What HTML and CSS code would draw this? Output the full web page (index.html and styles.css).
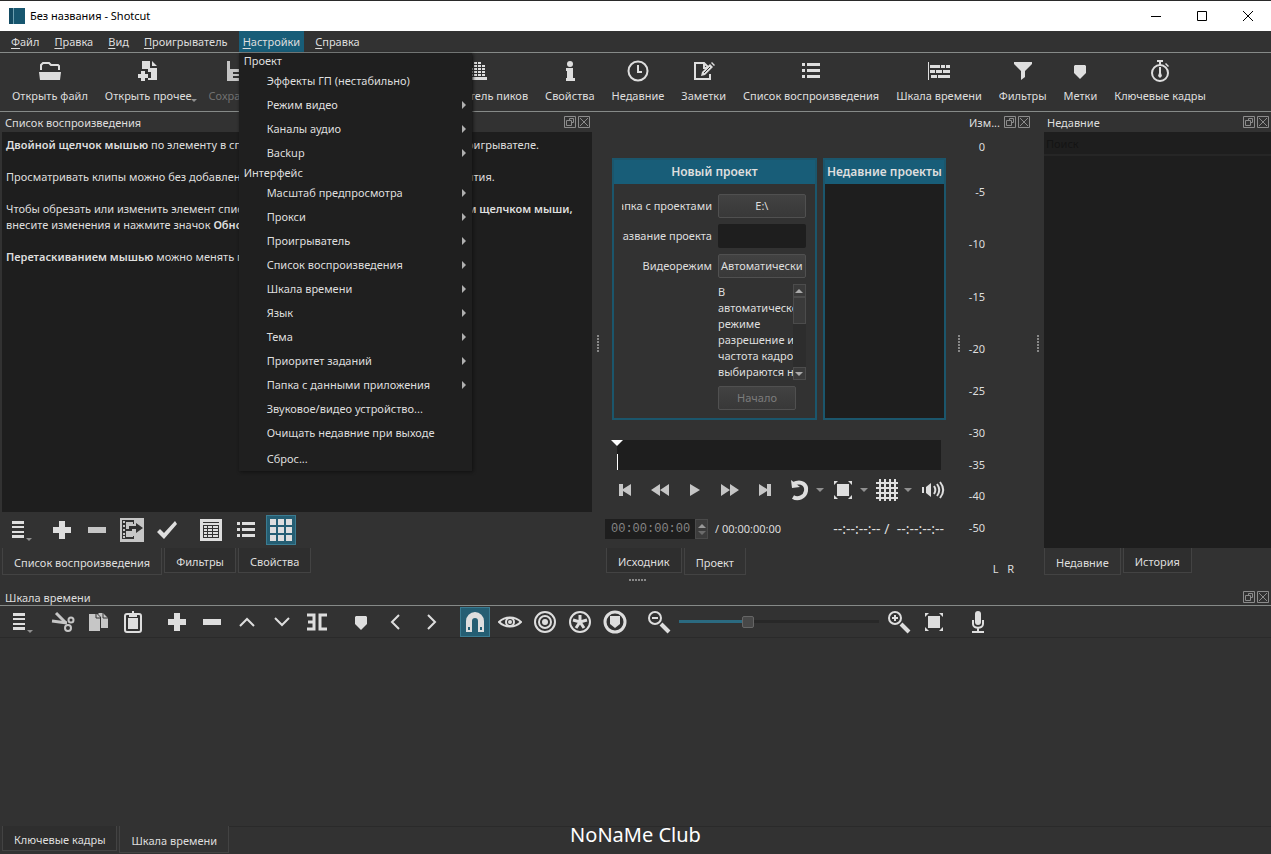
FILE: index.html
```html
<!doctype html>
<html lang="ru">
<head>
  <meta charset="utf-8">
  <title>Без названия - Shotcut</title>
  <link rel="stylesheet" href="styles.css">
</head>
<body>
  <svg class="sprite">
    <symbol id="i-open" viewBox="0 0 24 24"><path d="M3 11V6l2-2h6l2 2h7l1 1v4" class="st"/><path d="M1 13h22l-1 8H2z"/></symbol>
    <symbol id="i-open-other" viewBox="0 0 24 24"><path d="M6 2h8v7h7v12h-9v-2h3v-6h-3v-3H6z"/><path d="M16 2l5 5h-5zM5 12h4v3h3v4H9v3H5v-3H2v-4h3z"/></symbol>
    <symbol id="i-save" viewBox="0 0 24 24"><path d="M2 2h3v8h14V2h3v20H2zM8 13v2h11v-2zm0 4v2h11v-2z" fill-rule="evenodd"/></symbol>
    <symbol id="i-undo" viewBox="0 0 24 24"><path d="M3 9l7-6v4c8 0 11 5 11 12-2-5-5-7-11-7v4z"/></symbol>
    <symbol id="i-redo" viewBox="0 0 24 24"><path d="M21 9l-7-6v4C6 7 3 12 3 19c2-5 5-7 11-7v4z"/></symbol>
    <symbol id="i-peak" viewBox="0 0 24 24"><path d="M3 18h18v3H3zM4 15h3v2H4zm0-3h3v2H4zm0-3h3v2H4zM8 15h3v2H8zm0-3h3v2H8zm0-3h3v2H8zm0-3h3v2H8zm0-3h3v2H8zM12 15h3v2h-3zm0-3h3v2h-3zm0-3h3v2h-3zm0-3h3v2h-3zm0-3h3v2h-3zM16 15h3v2h-3zm0-3h3v2h-3zm0-3h3v2h-3zm0-3h3v2h-3z"/></symbol>
    <symbol id="i-info" viewBox="0 0 24 24"><circle cx="12" cy="5" r="3"/><path d="M8 9h7v10h2v3H8v-3h1v-7H8z"/></symbol>
    <symbol id="i-clock" viewBox="0 0 24 24"><circle cx="12" cy="12" r="9.500" class="st"/><path d="M12 6v7h4" class="st"/></symbol>
    <symbol id="i-notes" viewBox="0 0 24 24"><path d="M18 15v5H3V4h9l4 4M12 4v5h4" class="st"/><path d="M9 17l1-4 8-8 3 3-8 8zM20 3l3 3-1 1-3-3z"/><path d="M12 14l6-6" stroke="#323232"/></symbol>
    <symbol id="i-list" viewBox="0 0 24 24"><path d="M3 4h3v3H3zm5 0h13v3H8zM3 10h3v3H3zm5 0h13v3H8zM3 16h3v3H3zm5 0h13v3H8z"/></symbol>
    <symbol id="i-timeline" viewBox="0 0 24 24"><path d="M1 3h1v18H1zM3 6h10v3H3zm11 0h4v3h-4zm5 0h4v3h-4zM3 11h5v3H3zm6 0h6v3H9zm7 0h7v3h-7zM4 16h6v3H4zm7 0h12v3H11z"/></symbol>
    <symbol id="i-filter" viewBox="0 0 24 24"><path d="M3 3h18v2l-7 7v6l-4 3v-9L3 5z"/></symbol>
    <symbol id="i-marker" viewBox="0 0 24 24"><path d="M6 7l1-1h10l1 1v7l-6 6-6-6z"/></symbol>
    <symbol id="i-stopwatch" viewBox="0 0 24 24"><circle cx="12" cy="14" r="8" class="st"/><path d="M9 1h6v2h-2v3h-2V3H9zM18 4l3 3-1 1-3-3zM11 8h2v6l1 3-2 2-2-2 1-3z"/></symbol>
    <symbol id="i-menu" viewBox="0 0 24 24"><path d="M6 3h12v3H6zm0 5h12v2H6zm0 5h12v2H6zm0 4h12v3H6z"/></symbol>
    <symbol id="i-plus" viewBox="0 0 24 24"><path d="M9 3h6v6h6v6h-6v6H9v-6H3V9h6z"/></symbol>
    <symbol id="i-minus" viewBox="0 0 24 24"><path d="M3 9h18v6H3z"/></symbol>
    <symbol id="i-export" viewBox="0 0 24 24"><path d="M0 0h24v24H0zM2 2v19h12v-3h-1v1H6v-6h6v-2H6V4h7v2h1V2zM3 3h2v2H3zm0 4h2v2H3zm0 4h2v2H3zm0 4h2v2H3zm0 3h2v2H3zM16 5v3H9v3h7v4l7-5z" fill-rule="evenodd"/></symbol>
    <symbol id="i-check" viewBox="0 0 24 24"><path d="M2 14l3-3 4 4L20 3l2 3L9 21z"/></symbol>
    <symbol id="i-details" viewBox="0 0 24 24"><path d="M1 1h22v22H1zM4 4v1h16V4zM4 7v13h16V7zM5 8h3v2H5zm4 0h4v2H9zm5 0h5v2h-5zM5 11h3v2H5zm4 0h4v2H9zm5 0h5v2h-5zM5 14h3v2H5zm4 0h4v2H9zm5 0h5v2h-5zM5 17h3v2H5zm4 0h4v2H9zm5 0h5v2h-5z" fill-rule="evenodd"/></symbol>
    <symbol id="i-grid" viewBox="0 0 24 24"><path d="M1 1h6v6H1zm8 0h6v6H9zm8 0h6v6h-6zM1 9h6v6H1zm8 0h6v6H9zm8 0h6v6h-6zM1 17h6v6H1zm8 0h6v6H9zm8 0h6v6h-6z"/></symbol>
    <symbol id="i-first" viewBox="0 0 24 24"><path d="M6 6h4v5l8-5v12l-8-5v5H6z"/></symbol>
    <symbol id="i-rewind" viewBox="0 0 24 24"><path d="M12 6v12l-9-6zM21 6v12l-9-6z"/></symbol>
    <symbol id="i-play" viewBox="0 0 24 24"><path d="M7 6l10 6-10 6z"/></symbol>
    <symbol id="i-forward" viewBox="0 0 24 24"><path d="M3 6l9 6-9 6zM12 6l9 6-9 6z"/></symbol>
    <symbol id="i-last" viewBox="0 0 24 24"><path d="M6 6l8 5V6h4v12h-4v-5l-8 5z"/></symbol>
    <symbol id="i-loop" viewBox="0 0 24 24"><path d="M6 6c9-4 14 1 13 7-1 6-8 9-13 6" class="st w4"/><path d="M4 2l1 8 8-1z"/></symbol>
    <symbol id="i-fit" viewBox="0 0 24 24"><path d="M6 6h12v12H6zM3 3h4L3 7zM21 3v4l-4-4zM3 21v-4l4 4zM21 21h-4l4-4z"/></symbol>
    <symbol id="i-hash" viewBox="0 0 24 24"><path d="M5 1v22M10 1v22M15 1v22M20 1v22M1 5h22M1 10h22M1 15h22M1 20h22" class="st"/></symbol>
    <symbol id="i-volume" viewBox="0 0 24 24"><path d="M1 9h2v6H1zM5 9l5-4v14l-5-4z"/><path d="M13 8c2 3 2 5 0 8M16 6c3 4 3 8 0 12M19 4c4 5 4 11 0 16" class="st"/></symbol>
    <symbol id="i-cut" viewBox="0 0 24 24"><path d="M1 11l15 2" class="st w3"/><path d="M5 3l10 10" class="st w3"/><circle cx="20" cy="10" r="2.500" class="st"/><circle cx="17" cy="18" r="3" class="st"/></symbol>
    <symbol id="i-copy" viewBox="0 0 24 24"><path d="M3 4h8l3 3v14H3z"/><path d="M13 3h4l5 5v10h-7V7l-3-3z"/><path d="M10 4v4h4M17 3v5h5" stroke="#323232" fill="none"/></symbol>
    <symbol id="i-paste" viewBox="0 0 24 24"><rect x="4" y="4" width="16" height="18" rx="2" class="st"/><path d="M7 8h10v11H7zM8 3h3V1h2v2h3v4H8z"/></symbol>
    <symbol id="i-up" viewBox="0 0 24 24"><path d="M5 16l7-7 7 7" class="st"/></symbol>
    <symbol id="i-down" viewBox="0 0 24 24"><path d="M5 8l7 7 7-7" class="st"/></symbol>
    <symbol id="i-split" viewBox="0 0 24 24"><path d="M2 5h7v14H2M3 12h6M22 5h-7v14h7" class="st w3"/></symbol>
    <symbol id="i-prev" viewBox="0 0 24 24"><path d="M15 5l-7 7 7 7" class="st"/></symbol>
    <symbol id="i-next" viewBox="0 0 24 24"><path d="M9 5l7 7-7 7" class="st"/></symbol>
    <symbol id="i-magnet" viewBox="0 0 24 24"><path d="M3 22V11a9 9 0 0 1 18 0v11h-6V11a3 3 0 0 0-6 0v11zM5 17v3h2v-3zm12 0v3h2v-3z" fill-rule="evenodd"/></symbol>
    <symbol id="i-eye" viewBox="0 0 24 24"><path d="M1 12c6-6 16-6 22 0-6 6-16 6-22 0z" class="st"/><circle cx="12" cy="12" r="4" class="st"/><circle cx="12" cy="12" r="2"/></symbol>
    <symbol id="i-ripple" viewBox="0 0 24 24"><circle cx="12" cy="12" r="10" class="st"/><circle cx="12" cy="12" r="6" class="st"/><circle cx="12" cy="12" r="3"/></symbol>
    <symbol id="i-ripple-all" viewBox="0 0 24 24"><circle cx="12" cy="12" r="10" class="st"/><path d="M12 5v7M5 10l7 2 7-2M8 18l4-6 4 6" class="st w3"/></symbol>
    <symbol id="i-ripple-mark" viewBox="0 0 24 24"><circle cx="12" cy="12" r="10" class="st w3"/><path d="M7 6h10v8l-5 4-5-4z"/></symbol>
    <symbol id="i-zoom-out" viewBox="0 0 24 24"><circle cx="8" cy="8" r="6" class="st"/><path d="M5 8h6" class="st"/><path d="M14 14l8 8" class="st w4"/></symbol>
    <symbol id="i-zoom-in" viewBox="0 0 24 24"><circle cx="8" cy="8" r="6" class="st"/><path d="M5 8h6M8 5v6" class="st"/><path d="M14 14l8 8" class="st w4"/></symbol>
    <symbol id="i-mic" viewBox="0 0 24 24"><rect x="9" y="1" width="6" height="14" rx="3"/><path d="M7 10v4c0 5 10 5 10 0v-4M12 18v4M6 22h12" class="st"/></symbol>
    <symbol id="i-float" viewBox="0 0 12 12"><path d="M.5.5h11v11H.5zM5.500 2.500h4v4M2.500 4.500h5v5h-5zM5.500 2.500v2M9.500 6.500h-2" class="hair"/></symbol>
    <symbol id="i-close" viewBox="0 0 12 12"><path d="M.5.5h11v11H.5zM2 2l8 8M10 2l-8 8" class="hair"/></symbol>
  </svg>

  <header class="titlebar">
    <span class="app-icon"></span>
    <span class="title">Без названия - Shotcut</span>
    <div class="win-buttons">
      <button aria-label="Свернуть"><svg viewBox="0 0 12 12"><path d="M1 6.500h10"/></svg></button>
      <button aria-label="Развернуть"><svg viewBox="0 0 12 12"><path d="M1.500 1.500h9v9h-9z"/></svg></button>
      <button aria-label="Закрыть"><svg viewBox="0 0 12 12"><path d="M1 1l10 10M11 1L1 11"/></svg></button>
    </div>
  </header>

  <nav class="menubar">
    <button><u>Ф</u>айл</button>
    <button><u>П</u>равка</button>
    <button><u>В</u>ид</button>
    <button><u>П</u>роигрыватель</button>
    <div class="menu-holder">
      <button class="open"><u>Н</u>астройки</button>
      <div class="menu">
        <div class="section">Проект</div>
        <button>Эффекты ГП (нестабильно)</button>
        <button class="sub">Режим видео</button>
        <button class="sub">Каналы аудио</button>
        <button class="sub">Backup</button>
        <div class="section">Интерфейс</div>
        <button class="sub">Масштаб предпросмотра</button>
        <button class="sub">Прокси</button>
        <button class="sub">Проигрыватель</button>
        <button class="sub">Список воспроизведения</button>
        <button class="sub">Шкала времени</button>
        <button class="sub">Язык</button>
        <button class="sub">Тема</button>
        <button class="sub">Приоритет заданий</button>
        <button class="sub">Папка с данными приложения</button>
        <button>Звуковое/видео устройство...</button>
        <button>Очищать недавние при выходе</button>
        <hr>
        <button>Сброс...</button>
      </div>
    </div>
    <button><u>С</u>правка</button>
  </nav>

  <div class="toolbar">
    <button><svg><use href="#i-open"/></svg>Открыть файл</button>
    <button class="has-menu"><svg><use href="#i-open-other"/></svg>Открыть прочее</button>
    <button disabled><svg><use href="#i-save"/></svg>Сохранить</button>
    <i class="divider"></i>
    <button disabled><svg><use href="#i-undo"/></svg>Отменить</button>
    <button disabled><svg><use href="#i-redo"/></svg>Вернуть</button>
    <button><svg><use href="#i-peak"/></svg>Измеритель пиков</button>
    <button><svg><use href="#i-info"/></svg>Свойства</button>
    <button><svg><use href="#i-clock"/></svg>Недавние</button>
    <button><svg><use href="#i-notes"/></svg>Заметки</button>
    <button><svg><use href="#i-list"/></svg>Список воспроизведения</button>
    <button><svg><use href="#i-timeline"/></svg>Шкала времени</button>
    <button><svg><use href="#i-filter"/></svg>Фильтры</button>
    <button><svg><use href="#i-marker"/></svg>Метки</button>
    <button><svg><use href="#i-stopwatch"/></svg>Ключевые кадры</button>
  </div>

  <main class="upper">
    <section class="dock playlist">
      <div class="dock-title"><span>Список воспроизведения</span>
        <button aria-label="Открепить"><svg><use href="#i-float"/></svg></button>
        <button aria-label="Закрыть"><svg><use href="#i-close"/></svg></button>
      </div>
      <div class="list help">
        <p><b>Двойной щелчок мышью</b> по элементу в списке воспроизведения открывает его в проигрывателе.</p>
        <p>Просматривать клипы можно без добавления их в общий список сразу после их открытия.</p>
        <p>Чтобы обрезать или изменить элемент списка, сперва откройте его отдельно <b>двойным щелчком мыши,</b><br>
          внесите изменения и нажмите значок <b>Обновить</b>.</p>
        <p><b>Перетаскиванием мышью</b> можно менять порядок клипов.</p>
      </div>
      <div class="iconbar">
        <button class="has-menu" aria-label="Меню"><svg><use href="#i-menu"/></svg></button>
        <i class="sep"></i>
        <button aria-label="Добавить"><svg><use href="#i-plus"/></svg></button>
        <button class="dim" aria-label="Удалить"><svg><use href="#i-minus"/></svg></button>
        <button class="dim" aria-label="Добавить файлы"><svg><use href="#i-export"/></svg></button>
        <button aria-label="Обновить"><svg><use href="#i-check"/></svg></button>
        <i class="sep"></i>
        <button aria-label="Подробно"><svg><use href="#i-details"/></svg></button>
        <button aria-label="Плитка"><svg><use href="#i-list"/></svg></button>
        <button class="on" aria-label="Значки"><svg><use href="#i-grid"/></svg></button>
      </div>
      <div class="tabs">
        <button class="active">Список воспроизведения</button>
        <button>Фильтры</button>
        <button>Свойства</button>
      </div>
    </section>

    <div class="splitter"></div>

    <section class="dock player">
      <div class="stage">
        <form class="card new-project">
          <h2>Новый проект</h2>
          <div class="fields">
            <label for="folder"><span>Папка с проектами</span></label>
            <button type="button" id="folder">E:\</button>
            <label for="name"><span>Название проекта</span></label>
            <input type="text" id="name">
            <label for="mode"><span>Видеорежим</span></label>
            <button type="button" id="mode">Автоматически</button>
            <div class="hint">
              <p>В<br>автоматическом<br>режиме<br>разрешение и<br>частота кадров<br>выбираются на</p>
              <div class="scrollbar">
                <button type="button" class="arrow-up" aria-label="Вверх"></button>
                <span class="thumb"></span>
                <button type="button" class="arrow-down" aria-label="Вниз"></button>
              </div>
            </div>
            <button type="button" class="start" disabled>Начало</button>
          </div>
        </form>
        <div class="card recent-projects">
          <h2>Недавние проекты</h2>
          <div class="list"></div>
        </div>
      </div>
      <div class="scrub"><span class="playhead"></span></div>
      <div class="transport">
        <button class="dim" aria-label="В начало"><svg><use href="#i-first"/></svg></button>
        <button class="dim" aria-label="Назад"><svg><use href="#i-rewind"/></svg></button>
        <button class="dim" aria-label="Воспроизвести"><svg><use href="#i-play"/></svg></button>
        <button class="dim" aria-label="Вперёд"><svg><use href="#i-forward"/></svg></button>
        <button class="dim" aria-label="В конец"><svg><use href="#i-last"/></svg></button>
        <button class="drop" aria-label="Повтор"><svg><use href="#i-loop"/></svg></button>
        <button class="drop" aria-label="Масштаб"><svg><use href="#i-fit"/></svg></button>
        <button class="drop" aria-label="Сетка"><svg><use href="#i-hash"/></svg></button>
        <button class="volume" aria-label="Громкость"><svg><use href="#i-volume"/></svg></button>
      </div>
      <div class="timecode">
        <div class="spin">
          <input type="text" value="00:00:00:00" aria-label="Позиция" disabled>
          <span class="spin-arrows"></span>
        </div>
        <span class="duration">/ 00:00:00:00</span>
        <span class="in-out">--:--:--:-- /&nbsp; --:--:--:--</span>
      </div>
      <div class="tabs">
        <button>Исходник</button>
        <button class="active">Проект</button>
      </div>
    </section>

    <div class="splitter"></div>

    <section class="dock meter">
      <div class="dock-title"><span>Изм...</span>
        <button aria-label="Открепить"><svg><use href="#i-float"/></svg></button>
        <button aria-label="Закрыть"><svg><use href="#i-close"/></svg></button>
      </div>
      <div class="scale">
        <span>0</span><span>-5</span><span>-10</span><span>-15</span><span>-20</span>
        <span>-25</span><span>-30</span><span>-35</span><span>-40</span><span>-50</span>
        <span class="channels">L&nbsp;&nbsp; R</span>
      </div>
    </section>

    <div class="splitter"></div>

    <section class="dock recent">
      <div class="dock-title"><span>Недавние</span>
        <button aria-label="Открепить"><svg><use href="#i-float"/></svg></button>
        <button aria-label="Закрыть"><svg><use href="#i-close"/></svg></button>
      </div>
      <input type="text" class="search" placeholder="Поиск" aria-label="Поиск">
      <div class="list"></div>
      <div class="tabs">
        <button class="active">Недавние</button>
        <button>История</button>
      </div>
    </section>
  </main>

  <section class="dock timeline">
    <div class="h-splitter"></div>
    <div class="dock-title"><span>Шкала времени</span>
      <button aria-label="Открепить"><svg><use href="#i-float"/></svg></button>
      <button aria-label="Закрыть"><svg><use href="#i-close"/></svg></button>
    </div>
    <div class="iconbar">
      <button class="has-menu" aria-label="Меню"><svg><use href="#i-menu"/></svg></button>
      <i class="sep"></i>
      <button class="dim" aria-label="Вырезать"><svg><use href="#i-cut"/></svg></button>
      <button class="dim" aria-label="Копировать"><svg><use href="#i-copy"/></svg></button>
      <button aria-label="Вставить"><svg><use href="#i-paste"/></svg></button>
      <i class="sep"></i>
      <button aria-label="Добавить"><svg><use href="#i-plus"/></svg></button>
      <button aria-label="Удалить"><svg><use href="#i-minus"/></svg></button>
      <button aria-label="Поднять"><svg><use href="#i-up"/></svg></button>
      <button aria-label="Перезаписать"><svg><use href="#i-down"/></svg></button>
      <button aria-label="Разделить"><svg><use href="#i-split"/></svg></button>
      <i class="sep"></i>
      <button aria-label="Метка"><svg><use href="#i-marker"/></svg></button>
      <button aria-label="Предыдущая метка"><svg><use href="#i-prev"/></svg></button>
      <button aria-label="Следующая метка"><svg><use href="#i-next"/></svg></button>
      <i class="sep"></i>
      <button class="on" aria-label="Прилипание"><svg><use href="#i-magnet"/></svg></button>
      <button aria-label="Прокрутка"><svg><use href="#i-eye"/></svg></button>
      <button aria-label="Сдвиг"><svg><use href="#i-ripple"/></svg></button>
      <button aria-label="Сдвиг всех дорожек"><svg><use href="#i-ripple-all"/></svg></button>
      <button aria-label="Сдвиг меток"><svg><use href="#i-ripple-mark"/></svg></button>
      <i class="sep"></i>
      <button aria-label="Уменьшить"><svg><use href="#i-zoom-out"/></svg></button>
      <input type="range" min="0" max="300" value="100" aria-label="Масштаб шкалы">
      <button aria-label="Увеличить"><svg><use href="#i-zoom-in"/></svg></button>
      <button aria-label="Вписать"><svg><use href="#i-fit"/></svg></button>
      <i class="sep"></i>
      <button aria-label="Запись"><svg><use href="#i-mic"/></svg></button>
    </div>
    <div class="tracks"></div>
    <div class="tabs">
      <button>Ключевые кадры</button>
      <button class="active">Шкала времени</button>
    </div>
    <div class="watermark">NoNaMe Club</div>
  </section>
</body>
</html>
```
FILE: styles.css
```css
* {
  box-sizing: border-box;
}
html, body {
  height: 100%;
  margin: 0;
  overflow: hidden;
}
body {
  display: flex;
  flex-direction: column;
  background: #323232;
  color: #dedede;
  font: 11px/16px "Noto Sans", "Open Sans", sans-serif;
}
button, input {
  margin: 0;
  padding: 0;
  border: 0;
  background: none;
  color: inherit;
  font: inherit;
}
p, h2 {
  margin: 0;
}
b {
  font-weight: 600;
}
svg {
  display: block;
  width: 24px;
  height: 24px;
  fill: currentColor;
}
.sprite {
  display: none;
}
.st {
  fill: none;
  stroke: currentColor;
  stroke-width: 2;
}
.w3 { stroke-width: 3; }
.w4 { stroke-width: 4; }
.hair {
  fill: none;
  stroke: currentColor;
  stroke-width: 1;
}

/* window frame */
.titlebar {
  display: flex;
  align-items: center;
  flex: none;
  height: 31px;
  padding-left: 9px;
  border-top: 1px solid #2a2a2a;
  background: #fff;
  color: #000;
}
.app-icon {
  width: 16px;
  height: 16px;
  background: linear-gradient(90deg, #134b63 4px, #6d9fb0 4px, #6d9fb0 5px, #17566f 5px);
}
.title {
  flex: 1;
  padding-left: 5px;
}
.win-buttons {
  display: flex;
}
.win-buttons button {
  width: 46px;
  height: 30px;
}
.win-buttons svg {
  width: 12px;
  height: 12px;
  margin: auto;
  fill: none;
  stroke: #000;
}

/* menu bar */
.menubar {
  display: flex;
  flex: none;
  height: 21px;
  padding-left: 7px;
}
.menubar > button, .menu-holder > button {
  height: 21px;
  padding: 0 4px;
  margin-right: 7px;
}
.menubar u {
  text-underline-offset: 2px;
}
.menu-holder {
  position: relative;
}
.menu-holder > .open {
  background: #185d78;
}
.menu {
  position: absolute;
  top: 22px;
  left: 0;
  z-index: 10;
  width: 233px;
  background: #1f1f1f;
  box-shadow: 1px 1px 3px #111;
}
.menu .section {
  padding-left: 5px;
}
.menu button {
  display: flex;
  align-items: center;
  width: 100%;
  height: 24px;
  padding: 0 6px 0 28px;
}
.menu .sub::after {
  content: "";
  margin-left: auto;
  border: 4px solid transparent;
  border-left-color: #b0b0b0;
  border-right-width: 0;
}
.menu hr {
  height: 2px;
  margin: 0;
  border: 0;
}

/* main toolbar */
.toolbar {
  display: flex;
  gap: 3px;
  flex: none;
  height: 60px;
  padding-left: 5px;
  border-top: 1px solid #868a88;
  border-bottom: 1px solid #868a88;
  overflow: hidden;
}
.toolbar button {
  display: flex;
  flex-direction: column;
  align-items: center;
  gap: 5px;
  flex: none;
  padding: 6px 7px;
  white-space: nowrap;
}
.toolbar button:disabled {
  color: #707070;
}
.toolbar button:disabled svg {
  color: #c4c4c4;
}
.toolbar .divider {
  flex: none;
  width: 13px;
}
.has-menu {
  position: relative;
}
.has-menu::after, .drop::after {
  content: "";
  border: 4px solid transparent;
  border-top-color: #909090;
  border-bottom-width: 0;
}
.has-menu::after {
  position: absolute;
  right: 2px;
  bottom: 9px;
  border-width: 3px 3px 0;
}

/* docks */
.upper {
  display: flex;
  flex: 463 1 0;
  min-height: 0;
  padding-bottom: 13px;
}
.dock {
  display: flex;
  flex-direction: column;
  min-width: 0;
}
.playlist {
  flex: 592 1 0;
}
.player {
  flex: 349 1 0;
}
.meter {
  flex: 67 1 0;
}
.recent {
  flex: 227 1 0;
}
.dock-title {
  display: flex;
  align-items: center;
  flex: none;
  height: 20px;
  padding-left: 5px;
}
.dock-title span {
  flex: 1;
  padding-top: 2px;
}
.dock-title button {
  width: 14px;
  color: #8c8c8c;
}
.dock-title svg {
  width: 12px;
  height: 12px;
}
.list {
  flex: 1;
  background: #1e1e1e;
}
.playlist .list {
  margin-left: 2px;
}
.splitter {
  display: flex;
  align-items: center;
  justify-content: center;
  flex: none;
  width: 12px;
}
.splitter::after {
  content: "";
  width: 2px;
  height: 18px;
  background: repeating-linear-gradient(#888 0 2px, transparent 2px 3px);
}
.help {
  padding: 5px 4px;
  white-space: nowrap;
  overflow: hidden;
}
.help p {
  margin-bottom: 16px;
}

.iconbar {
  display: flex;
  align-items: center;
  gap: 5px;
  flex: none;
  height: 36px;
  padding-left: 3px;
}
.iconbar button {
  display: flex;
  align-items: center;
  justify-content: center;
  flex: none;
  width: 30px;
  height: 30px;
}
.iconbar .has-menu::after {
  right: 1px;
  bottom: 4px;
}
.iconbar .on {
  border: 1px solid #3b7c92;
  background: #255e73;
}
.sep {
  width: 4px;
}
.dim {
  color: #c6c6c6;
}

.tabs {
  display: flex;
  align-items: flex-start;
  gap: 2px;
  flex: none;
  height: 27px;
  padding-left: 2px;
}
.tabs button {
  height: 25px;
  padding: 3px 11px 0;
  border: 1px solid #434343;
  border-top: 0;
  background: #2e2e2e;
  white-space: nowrap;
}
.tabs .active {
  height: 27px;
  background: #323232;
}

/* player */
.stage {
  display: flex;
  gap: 6px;
  flex: 1;
  padding: 46px 7px 20px 8px;
  min-height: 0;
}
.card {
  display: flex;
  flex-direction: column;
  min-width: 0;
  border: 2px solid #1b566c;
}
.new-project {
  flex: 207 1 0;
}
.recent-projects {
  flex: 123 1 0;
}
.card h2 {
  height: 24px;
  background: #185d78;
  font-size: 12px;
  font-weight: 600;
  line-height: 24px;
  text-align: center;
  white-space: nowrap;
}
.fields {
  display: grid;
  grid-template-columns: 90px minmax(0, 1fr);
  column-gap: 6px;
  row-gap: 6px;
  align-items: center;
  padding: 10px 9px 0 8px;
}
.fields label {
  display: flex;
  justify-content: flex-end;
  overflow: hidden;
  white-space: nowrap;
}
.fields > button, .fields input {
  width: 100%;
  height: 24px;
  border-radius: 2px;
}
.fields > button {
  border: 1px solid #505050;
  background: linear-gradient(#424242, #383838);
  white-space: nowrap;
}
.fields input {
  background: #1e1e1e;
}
.hint {
  display: flex;
  grid-column: 2;
  height: 96px;
}
.hint p {
  flex: 1;
  overflow: hidden;
  white-space: nowrap;
}
.scrollbar {
  display: flex;
  flex-direction: column;
  flex: none;
  width: 13px;
  background: #2d2d2d;
}
.scrollbar button, .thumb {
  border: 1px solid #4c4c4c;
  background: #3a3a3a;
}
.scrollbar button {
  display: flex;
  align-items: center;
  justify-content: center;
  height: 13px;
}
.scrollbar button::after {
  content: "";
  border: 4px solid transparent;
}
.scrollbar .arrow-up::after {
  border-top-width: 0;
  border-bottom-color: #aaa;
}
.scrollbar .arrow-down::after {
  border-bottom-width: 0;
  border-top-color: #aaa;
}
.thumb {
  height: 27px;
  margin-bottom: auto;
}
.fields > .start {
  grid-column: 2;
  width: 78px;
  color: #7c7c7c;
}

.scrub {
  position: relative;
  flex: none;
  height: 30px;
  margin: 0 12px 0 13px;
  background: #1e1e1e;
}
.playhead {
  position: absolute;
  top: 14px;
  left: 0;
  width: 1px;
  height: 16px;
  background: #fff;
}
.playhead::before {
  content: "";
  position: absolute;
  top: -14px;
  left: -6px;
  border: 6px solid transparent;
  border-top-color: #fff;
  border-bottom-width: 0;
}
.transport {
  display: flex;
  align-items: center;
  flex: none;
  height: 40px;
  padding-left: 3px;
}
.transport button {
  display: flex;
  align-items: center;
  justify-content: center;
  width: 35px;
}
.transport .drop {
  gap: 5px;
  width: 44px;
}
.transport .drop, .transport .volume {
  padding-left: 3px;
}
.timecode {
  display: flex;
  align-items: center;
  flex: none;
  height: 38px;
  padding: 0 9px 0 1px;
}
.spin {
  display: flex;
  width: 103px;
  height: 20px;
  background: #1e1e1e;
}
.spin input {
  flex: 1;
  min-width: 0;
  padding-left: 6px;
  color: #858585;
  font-family: "Liberation Mono", monospace;
  font-size: 12px;
}
.spin-arrows {
  display: flex;
  flex-direction: column;
  align-items: center;
  justify-content: center;
  gap: 3px;
  width: 13px;
  border: 1px solid #4a4a4a;
  background: #3c3c3c;
}
.spin-arrows::before, .spin-arrows::after {
  content: "";
  border: 4px solid transparent;
}
.spin-arrows::before {
  border-top-width: 0;
  border-bottom-color: #999;
}
.spin-arrows::after {
  border-bottom-width: 0;
  border-top-color: #6c6c6c;
}
.duration {
  margin-left: 7px;
}
.in-out {
  margin-left: auto;
  font-size: 14px;
}

/* audio meter */
.meter .dock-title {
  padding-left: 4px;
}
.scale {
  display: grid;
  grid-template-rows: 45fr 52fr 53fr 52fr 42fr 42fr 32fr 31fr 32fr 41fr 14px;
  flex: 1;
  padding-top: 7px;
}
.scale span {
  width: 20px;
  text-align: right;
  height: 16px;
}
.scale .channels {
  width: auto;
  padding-right: 18px;
}

.recent .search {
  flex: none;
  width: 100%;
  height: 24px;
  padding-left: 2px;
  border-bottom: 2px solid #262626;
  background: #1e1e1e;
}
.search::placeholder {
  color: #141414;
}
.recent .dock-title {
  padding-left: 3px;
}
.recent .tabs {
  padding-left: 0;
}

/* timeline */
.timeline {
  position: relative;
  flex: 266 1 0;
}
.timeline .dock-title {
  height: 17px;
}
.timeline .iconbar {
  height: 33px;
  padding-left: 4px;
  border-top: 1px solid #868a88;
  border-bottom: 1px solid #2a2a2a;
}
.h-splitter {
  position: absolute;
  top: -9px;
  left: 50%;
  width: 18px;
  height: 2px;
  margin-left: -7px;
  background: repeating-linear-gradient(90deg, #888 0 2px, transparent 2px 3px);
}
.tracks {
  flex: 1;
}
.timeline .tabs {
  height: 28px;
}
.timeline .tabs::after {
  content: "";
  flex: 1;
  margin-left: -2px;
  border-top: 1px solid #2a2a2a;
}
input[type=range] {
  appearance: none;
  width: 200px;
  height: 12px;
}
input[type=range]::-webkit-slider-runnable-track {
  height: 3px;
  background: linear-gradient(90deg, #2b6a80 33%, #282828 33%);
}
input[type=range]::-webkit-slider-thumb {
  appearance: none;
  width: 12px;
  height: 12px;
  margin-top: -4px;
  border: 1px solid #666;
  border-radius: 2px;
  background: #484848;
}
.watermark {
  position: absolute;
  bottom: 4px;
  left: 50%;
  transform: translateX(-50%);
  color: #fff;
  font-size: 20px;
  line-height: 30px;
}
```
